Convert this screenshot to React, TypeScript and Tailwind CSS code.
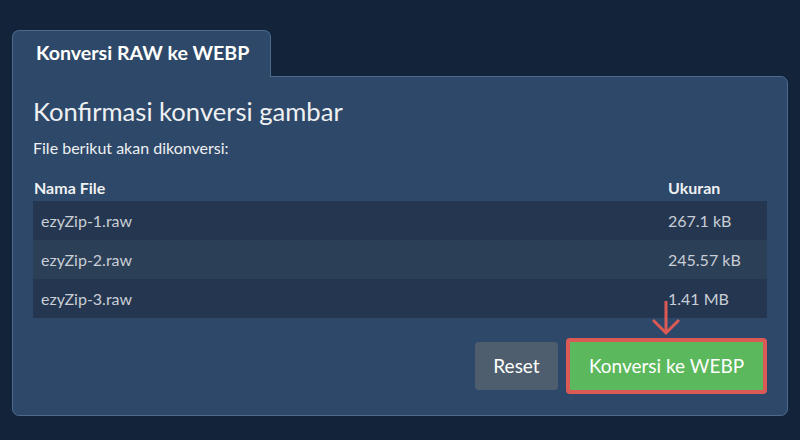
import React from "react";

const rows = [
  { name: "ezyZip-1.raw", size: "267.1 kB" },
  { name: "ezyZip-2.raw", size: "245.57 kB" },
  { name: "ezyZip-3.raw", size: "1.41 MB" },
];

export default function App() {
  return (
    <div
      className="w-[800px] h-[440px] bg-[#12233a] pl-[12px] pt-[30px]"
      style={{ fontFamily: "Lato, 'Open Sans', sans-serif" }}
    >
      <div className="relative z-10 -mb-px w-[259px] h-[47px] rounded-t-[7px] border border-b-0 border-[#4c6a8b] bg-[#2d4868] pl-[23px] pt-[10px]">
        <span className="text-[19.6px] font-bold text-white leading-[24px]">Konversi RAW ke WEBP</span>
      </div>
      <div className="w-[776px] h-[340px] rounded-b-[7px] rounded-tr-[7px] border border-[#4c6a8b] bg-[#2d4868] px-[20px] pt-[18px] flex flex-col">
        <h1 className="text-[25.6px] leading-[32px] text-[#eef0f2] font-normal">Konfirmasi konversi gambar</h1>
        <p className="mt-[11px] text-[16px] leading-[19px] text-[#eef0f2]">File berikut akan dikonversi:</p>
        <div className="mt-[20px] flex text-[16px] font-bold text-[#eef0f2] leading-[22px] h-[24px]">
          <div className="flex-1 pl-[1px]">Nama File</div>
          <div className="w-[99px]">Ukuran</div>
        </div>
        <div className="flex flex-col">
          {rows.map((r, i) => (
            <div
              key={r.name}
              className={`flex h-[39px] items-center text-[16px] text-[#c9ced6] ${
                i % 2 === 0 ? "bg-[#253750]" : "bg-[#2b3f57]"
              }`}
            >
              <div className="flex-1 pl-[8px]">{r.name}</div>
              <div className="w-[99px]">{r.size}</div>
            </div>
          ))}
        </div>
        <div className="mt-[20px] flex justify-end items-center gap-[8px]">
          <button className="w-[83px] h-[48px] rounded-[4px] bg-[#4f5e6e] text-white text-[19px]">
            Reset
          </button>
          <div className="relative">
            <button className="w-[201px] h-[56px] rounded-[4px] border-[4px] border-[#dc5a55] bg-[#5cb85c] text-white text-[19px]">
              Konversi ke WEBP
            </button>
            <svg
              className="absolute left-[86px] top-[-38px]"
              width="30"
              height="36"
              viewBox="0 0 30 36"
            >
              <path
                d="M14 1 V33 M1 20 L14 33 L27 20"
                stroke="#dc5a55"
                strokeWidth="3"
                fill="none"
              />
            </svg>
          </div>
        </div>
      </div>
    </div>
  );
}
